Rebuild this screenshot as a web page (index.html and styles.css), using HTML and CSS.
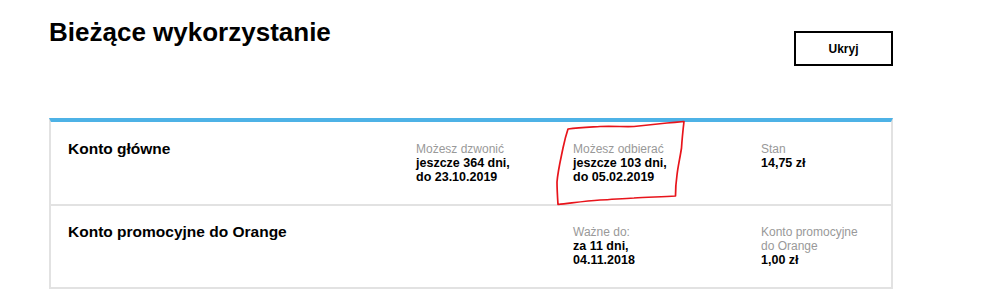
FILE: index.html
```html
<!DOCTYPE html>
<html>
<head>
  <meta charset="UTF-8">
  <title>Bieżące wykorzystanie</title>
  <link rel="stylesheet" href="styles.css">
</head>
<body>
  <div class="page">
    <div class="header">
      <h1>Bieżące wykorzystanie</h1>
      <button class="btn-hide">Ukryj</button>
    </div>

    <div class="card">
      <div class="account-row">
        <h2>Konto główne</h2>
        <div class="info">
          <div class="label">Możesz dzwonić</div>
          <div class="value">jeszcze 364 dni,<br>do 23.10.2019</div>
        </div>
        <div class="info">
          <div class="label">Możesz odbierać</div>
          <div class="value">jeszcze 103 dni,<br>do 05.02.2019</div>
        </div>
        <div class="info">
          <div class="label">Stan</div>
          <div class="value">14,75 zł</div>
        </div>
      </div>

      <div class="account-row">
        <h2>Konto promocyjne do Orange</h2>
        <div class="info"></div>
        <div class="info">
          <div class="label">Ważne do:</div>
          <div class="value">za 11 dni,<br>04.11.2018</div>
        </div>
        <div class="info">
          <div class="label">Konto promocyjne do Orange</div>
          <div class="value">1,00 zł</div>
        </div>
      </div>
    </div>
  </div>

  <!-- odręczne zaznaczenie na zrzucie -->
  <svg class="markup" width="999" height="290" viewBox="0 0 999 290">
    <path d="M568 129 C580 127 592 127 600 126.5 C615 126 625 127 634 126.5 C648 125 658 124 667 123 C674 122.5 679 122 684 121.5 C683 130 682 140 681.5 148 C680 158 678 166 677 175 C676 182 675.5 189 675.5 196 C662 197 648 197 634 198 C622 198.5 612 199.5 600 200 C585 201 572 203 558 204.5 C557.5 197 557 189 557 182 C558 170 561 158 563 148 C564.5 141 566 135 568 129 Z"
          fill="none" stroke="#e8141b" stroke-width="1.7" stroke-linejoin="round"/>
  </svg>
</body>
</html>
```

FILE: styles.css
```css
body {
  margin: 0;
  font-family: "Liberation Sans", Arial, sans-serif;
  color: #000000;
  background-color: #ffffff;
}

.page {
  width: 844px;
  margin-left: 49px;
  padding-top: 17px;
}

.header {
  display: flex;
  justify-content: space-between;
  align-items: flex-start;
  height: 101px;
}

h1 {
  margin: 0;
  font-size: 26px;
  line-height: 30px;
  font-weight: bold;
}

.btn-hide {
  margin-top: 14px;
  width: 99px;
  height: 35px;
  background-color: #ffffff;
  border: 2px solid #000000;
  border-radius: 0;
  font-family: "Liberation Sans", Arial, sans-serif;
  font-size: 12px;
  font-weight: bold;
  color: #000000;
  cursor: pointer;
}

.card {
  border: 2px solid #e2e2e2;
  border-top: 4px solid #4db2e6;
}

.account-row {
  display: grid;
  grid-template-columns: 348px 157px 188px 1fr;
  padding: 17px 0 19px 17px;
  min-height: 46px;
}

.account-row + .account-row {
  border-top: 2px solid #e2e2e2;
  padding-top: 16px;
}

h2 {
  margin: 0;
  padding-top: 1px;
  font-size: 15.5px;
  line-height: 18px;
  font-weight: bold;
}

.info {
  padding-top: 3px;
  padding-right: 20px;
}

.label {
  font-size: 12px;
  line-height: 14px;
  color: #999999;
}

.value {
  font-size: 12.5px;
  line-height: 14px;
  font-weight: bold;
}

.markup {
  position: absolute;
  left: 0;
  top: 0;
  pointer-events: none;
}
```
